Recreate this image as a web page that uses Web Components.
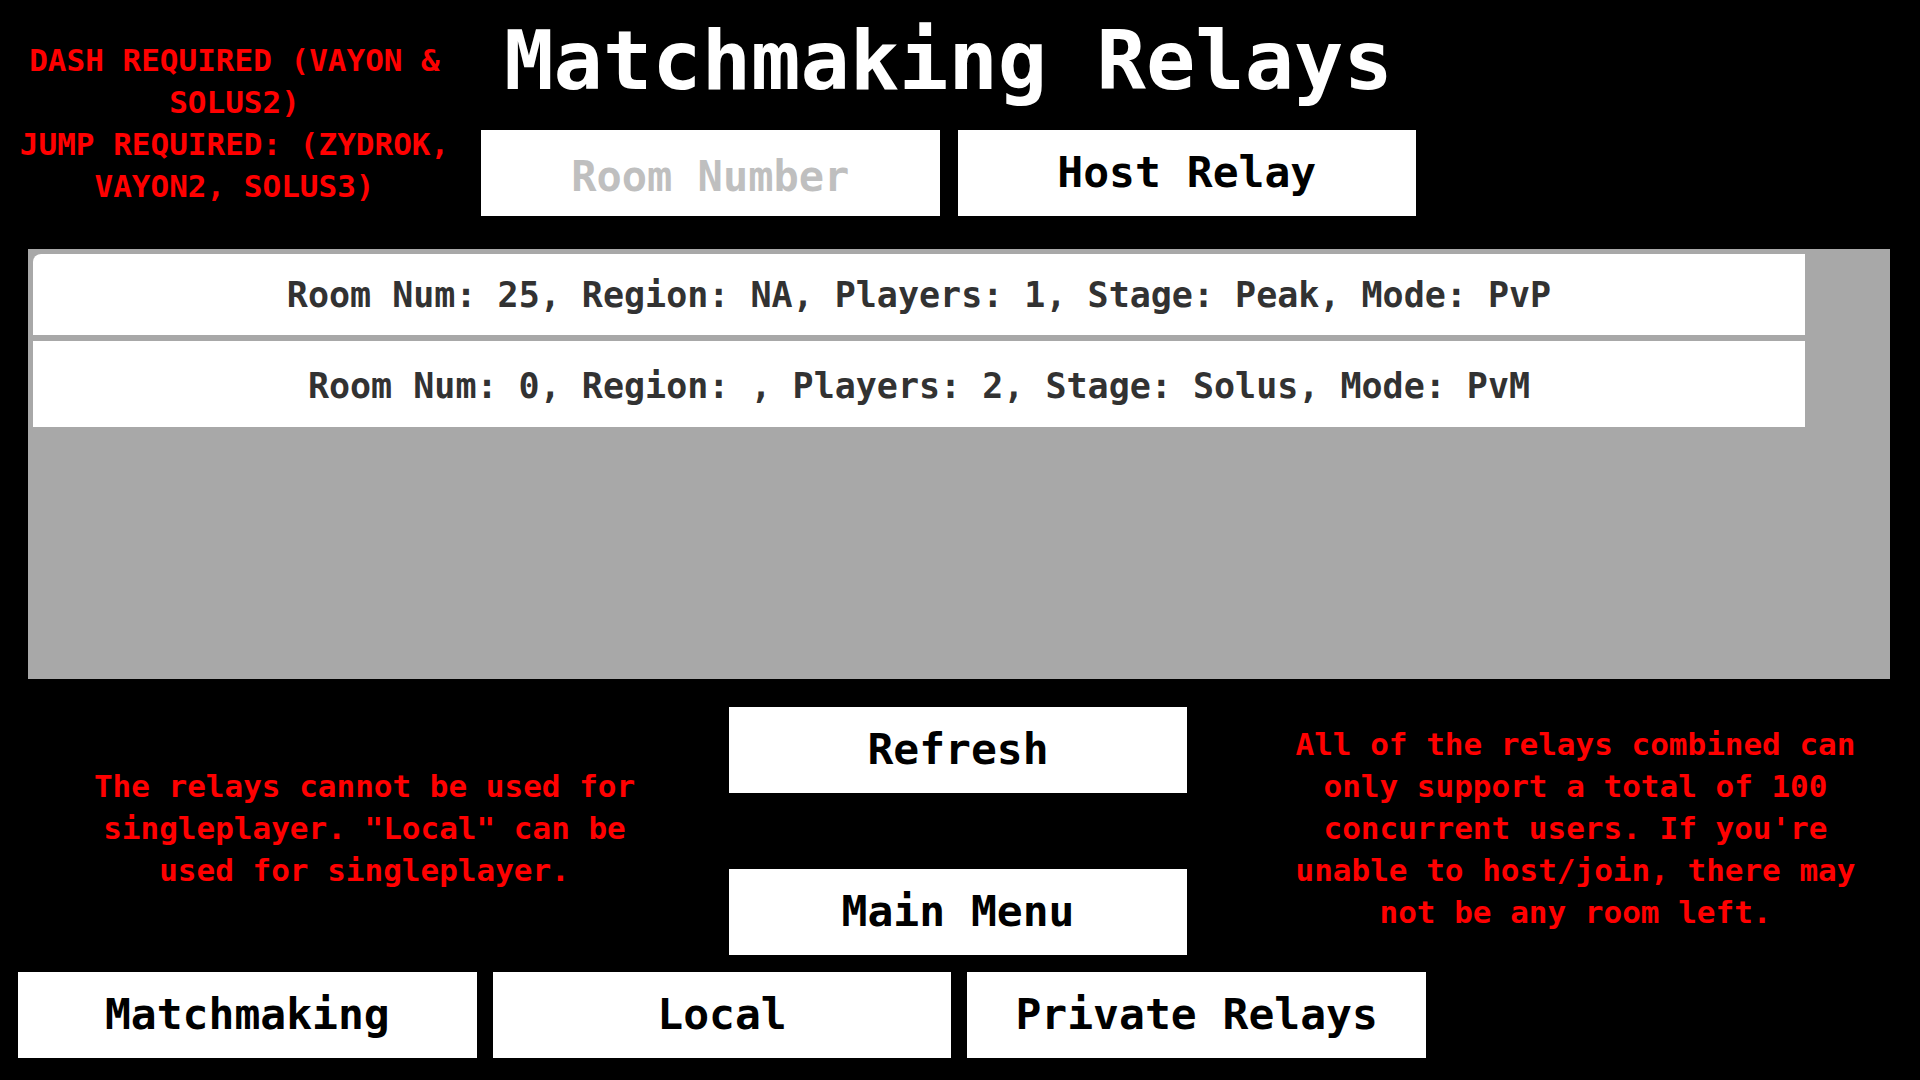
<!DOCTYPE html>
<html lang="en">
<head>
<meta charset="utf-8">
<meta name="viewport" content="width=device-width, initial-scale=1">
<title>Matchmaking Relays</title>
<style>
  body {
    margin: 0;
    background: #000;
    font-family: "DejaVu Sans Mono", "Liberation Mono", monospace;
    font-weight: 700;
  }
</style>
</head>
<body>
<relay-screen></relay-screen>

<template id="relay-screen">
  <style>
    :host { display: flex; flex-direction: column; min-height: 100vh; box-sizing: border-box; padding-bottom: 22px; }
    header { display: grid; grid-template-columns: 481fr 935fr 504fr; align-items: start; margin-bottom: 33px; }
    .warning { padding: 39px 12px 0 0; }
    .top { display: flex; flex-direction: column; gap: 26px; padding-top: 18px; }
    h1 { margin: 0; color: #fff; font-size: 82px; line-height: 86px; text-align: center; white-space: nowrap; }
    .host { display: grid; grid-template-columns: 1fr 1fr; gap: 18px; }
    main { display: flex; flex-direction: column; flex: 1; }
    room-list { flex: 1; margin: 0 30px 0 28px; }
    .lower { display: grid; grid-template-columns: 729fr 458fr 733fr; align-items: center; padding: 28px 0 17px; }
    .actions { display: flex; flex-direction: column; gap: 76px; }
    .lower relay-notice { max-width: 580px; justify-self: center; padding-bottom: 6px; }
    .lower .capacity { padding-left: 44px; }
    nav { display: grid; grid-template-columns: 1fr 1fr 1fr; gap: 16px; margin-left: 18px; padding-right: 494px; }
  </style>
  <header>
    <relay-notice class="warning">
      <p>DASH REQUIRED (VAYON &amp; SOLUS2)</p>
      <p>JUMP REQUIRED: (ZYDROK, VAYON2, SOLUS3)</p>
    </relay-notice>
    <div class="top">
      <h1>Matchmaking Relays</h1>
      <div class="host">
        <room-field></room-field>
        <relay-button>Host Relay</relay-button>
      </div>
    </div>
  </header>
  <main>
    <room-list>
      <room-row first>Room Num: 25, Region: NA, Players: 1, Stage: Peak, Mode: PvP</room-row>
      <room-row>Room Num: 0, Region: , Players: 2, Stage: Solus, Mode: PvM</room-row>
    </room-list>
    <div class="lower">
      <relay-notice><p>The relays cannot be used for singleplayer. "Local" can be used for singleplayer.</p></relay-notice>
      <div class="actions">
        <relay-button>Refresh</relay-button>
        <relay-button>Main Menu</relay-button>
      </div>
      <relay-notice class="capacity"><p>All of the relays combined can only support a total of 100 concurrent users. If you're unable to host/join, there may not be any room left.</p></relay-notice>
    </div>
  </main>
  <nav>
    <relay-button>Matchmaking</relay-button>
    <relay-button>Local</relay-button>
    <relay-button>Private Relays</relay-button>
  </nav>
</template>

<template id="relay-button">
  <style>
    :host { display: block; }
    button { display: block; width: 100%; height: 86px; margin: 0; padding: 0 0 2px; border: 0; background: #fff; color: #000; font: inherit; font-size: 43px; line-height: 48px; white-space: nowrap; cursor: pointer; }
    button:hover { background: #f0f0f0; }
  </style>
  <button type="button"><slot></slot></button>
</template>

<template id="relay-notice">
  <style>
    :host { display: block; color: #f00; font-size: 31px; line-height: 42px; text-align: center; }
    ::slotted(p) { margin: 0; }
  </style>
  <slot></slot>
</template>

<template id="room-field">
  <style>
    :host { display: block; }
    input { display: block; box-sizing: border-box; width: 100%; height: 86px; margin: 0; padding: 6px 12px 0; border: 0; border-radius: 0; background: #fff; color: #323232; font: inherit; font-size: 42px; text-align: center; }
    input::placeholder { color: #bfbfbf; opacity: 1; }
  </style>
  <input type="text" inputmode="numeric" placeholder="Room Number" aria-label="Room Number">
</template>

<template id="room-list">
  <style>
    :host { display: flex; flex-direction: column; gap: 6px; box-sizing: border-box; padding: 5px 85px 5px 5px; background: #a8a8a8; }
  </style>
  <slot></slot>
</template>

<template id="room-row">
  <style>
    :host { display: block; }
    button { display: block; width: 100%; height: 86px; margin: 0; padding: 4px 0 0; border: 0; background: #fff; color: #323232; font: inherit; font-size: 35px; line-height: 42px; cursor: pointer; }
    :host([first]) button { height: 81px; padding: 0; border-top-left-radius: 8px; }
    button:hover { background: #f5f5f5; }
  </style>
  <button type="button"><slot></slot></button>
</template>

<script>
  class TemplateElement extends HTMLElement {
    constructor() {
      super();
      const template = document.getElementById(this.localName);
      this.attachShadow({ mode: "open" }).append(template.content.cloneNode(true));
    }
  }
  customElements.define("relay-button", class extends TemplateElement {});
  customElements.define("relay-notice", class extends TemplateElement {});
  customElements.define("room-field", class extends TemplateElement {});
  customElements.define("room-row", class extends TemplateElement {});
  customElements.define("room-list", class extends TemplateElement {});
  customElements.define("relay-screen", class extends TemplateElement {});
</script>
</body>
</html>
